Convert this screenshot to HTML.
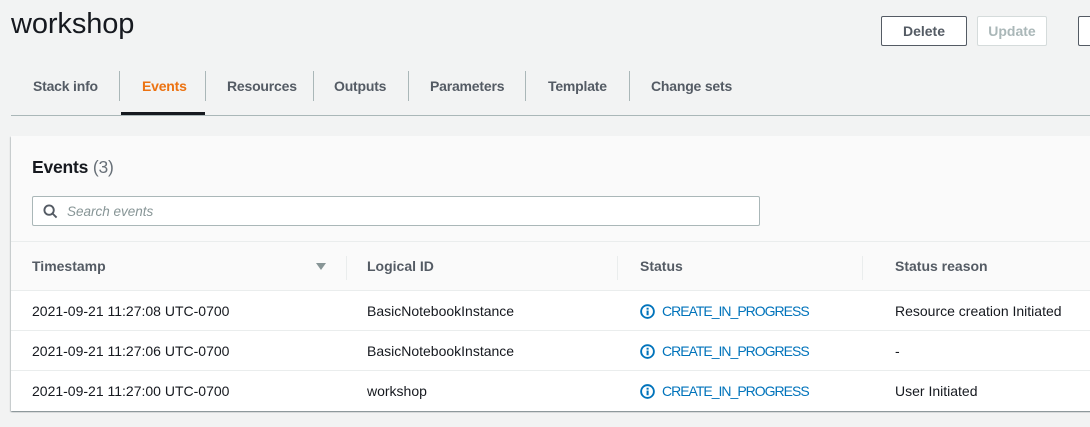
<!DOCTYPE html>
<html><head><meta charset="utf-8"><style>
*{box-sizing:border-box;margin:0;padding:0}
body{width:1090px;height:427px;overflow:hidden;background:#f2f3f3;font-family:"Liberation Sans",Arial,sans-serif;color:#16191f;position:relative}
.abs{position:absolute}
h1{position:absolute;left:11px;top:8px;font-size:29px;font-weight:400;color:#16191f;letter-spacing:-0.1px}
.btn{position:absolute;top:16px;height:30px;border:1px solid #545b64;border-radius:2px;background:#fff;font-weight:700;font-size:14px;color:#545b64;text-align:center;line-height:28px}
.tab{position:absolute;top:78px;font-size:14px;font-weight:700;color:#545b64;letter-spacing:-0.2px;white-space:nowrap}
.sep{position:absolute;top:71px;width:1px;height:30px;background:#aab7b8}
.panel{position:absolute;left:11px;top:136px;width:1090px;height:275px;background:#fff;box-shadow:0 1px 1px rgba(0,28,36,.3),1px 1px 1px rgba(0,28,36,.15),-1px 1px 1px rgba(0,28,36,.15)}
.ph{position:absolute;left:0;top:0;width:100%;height:105px;background:#fafafa}
.hd{position:absolute;left:0;top:105px;width:100%;height:50px;background:#fafafa;border-top:1px solid #eaeded;border-bottom:1px solid #eaeded}
.row{position:absolute;left:0;width:100%;height:40px;border-bottom:1px solid #eaeded;font-size:14px}
.c{position:absolute;top:12px;white-space:nowrap}
.th{position:absolute;top:16px;font-size:14px;font-weight:700;color:#545b64}
.st{color:#0073bb;letter-spacing:-1px}
.ic{display:inline-block;vertical-align:-3px;margin-right:7px}
</style></head><body>
<h1>workshop</h1>
<div class="btn" style="left:881px;width:86px">Delete</div>
<div class="btn" style="left:977px;width:70px;border-color:#d5dbdb;color:#aab7b8">Update</div>
<div class="btn" style="left:1078px;width:40px"></div>

<div class="tab" style="left:33px">Stack info</div>
<div class="sep" style="left:119px"></div>
<div class="tab" style="left:142px;color:#ec7211">Events</div>
<div class="sep" style="left:205px"></div>
<div class="tab" style="left:227px">Resources</div>
<div class="sep" style="left:313px"></div>
<div class="tab" style="left:334px">Outputs</div>
<div class="sep" style="left:408px"></div>
<div class="tab" style="left:430px">Parameters</div>
<div class="sep" style="left:525px"></div>
<div class="tab" style="left:548px">Template</div>
<div class="sep" style="left:629px"></div>
<div class="tab" style="left:651px">Change sets</div>
<div class="abs" style="left:11px;top:115px;width:1079px;height:1px;background:#aab7b8"></div>
<div class="abs" style="left:121px;top:112px;width:84px;height:3px;background:#16191f"></div>

<div class="panel">
 <div class="ph">
  <div class="abs" style="left:21px;top:21px;font-size:17.5px;font-weight:700;letter-spacing:-0.2px">Events <span style="font-weight:400;color:#687078">(3)</span></div>
  <div class="abs" style="left:21px;top:60px;width:728px;height:30px;border:1px solid #aab7b8;border-radius:2px;background:#fff">
   <svg class="abs" style="left:10px;top:7px" width="15" height="15" viewBox="0 0 16 16"><circle cx="6.5" cy="6.5" r="5" fill="none" stroke="#545b64" stroke-width="2"/><line x1="10" y1="10" x2="14.5" y2="14.5" stroke="#545b64" stroke-width="2"/></svg>
   <span class="abs" style="left:34px;top:7px;font-size:13.5px;font-style:italic;color:#879596">Search events</span>
  </div>
 </div>
 <div class="hd">
  <div class="th" style="left:21px">Timestamp</div>
  <svg class="abs" style="left:305px;top:21px" width="10" height="7"><path d="M0 0h10L5 7z" fill="#879596"/></svg>
  <div class="abs" style="left:335px;top:14px;width:1px;height:24px;background:#eaeded"></div>
  <div class="th" style="left:356px">Logical ID</div>
  <div class="abs" style="left:606px;top:14px;width:1px;height:24px;background:#eaeded"></div>
  <div class="th" style="left:629px">Status</div>
  <div class="abs" style="left:851px;top:14px;width:1px;height:24px;background:#eaeded"></div>
  <div class="th" style="left:884px">Status reason</div>
 </div>
 <div class="row" style="top:155px"><span class="c" style="left:21px">2021-09-21 11:27:08 UTC-0700</span><span class="c" style="left:356px">BasicNotebookInstance</span><span class="c st" style="left:629px"><svg class="ic" width="15" height="15" viewBox="0 0 16 16"><circle cx="8" cy="8" r="6.8" fill="none" stroke="#0073bb" stroke-width="2"/><rect x="7" y="7" width="2.2" height="5" fill="#0073bb"/><rect x="7" y="4" width="2.2" height="2" fill="#0073bb"/></svg>CREATE_IN_PROGRESS</span><span class="c" style="left:884px">Resource creation Initiated</span></div>
 <div class="row" style="top:195px"><span class="c" style="left:21px">2021-09-21 11:27:06 UTC-0700</span><span class="c" style="left:356px">BasicNotebookInstance</span><span class="c st" style="left:629px"><svg class="ic" width="15" height="15" viewBox="0 0 16 16"><circle cx="8" cy="8" r="6.8" fill="none" stroke="#0073bb" stroke-width="2"/><rect x="7" y="7" width="2.2" height="5" fill="#0073bb"/><rect x="7" y="4" width="2.2" height="2" fill="#0073bb"/></svg>CREATE_IN_PROGRESS</span><span class="c" style="left:884px">-</span></div>
 <div class="row" style="top:235px;border-bottom:none"><span class="c" style="left:21px">2021-09-21 11:27:00 UTC-0700</span><span class="c" style="left:356px">workshop</span><span class="c st" style="left:629px"><svg class="ic" width="15" height="15" viewBox="0 0 16 16"><circle cx="8" cy="8" r="6.8" fill="none" stroke="#0073bb" stroke-width="2"/><rect x="7" y="7" width="2.2" height="5" fill="#0073bb"/><rect x="7" y="4" width="2.2" height="2" fill="#0073bb"/></svg>CREATE_IN_PROGRESS</span><span class="c" style="left:884px">User Initiated</span></div>
</div>
</body></html>
